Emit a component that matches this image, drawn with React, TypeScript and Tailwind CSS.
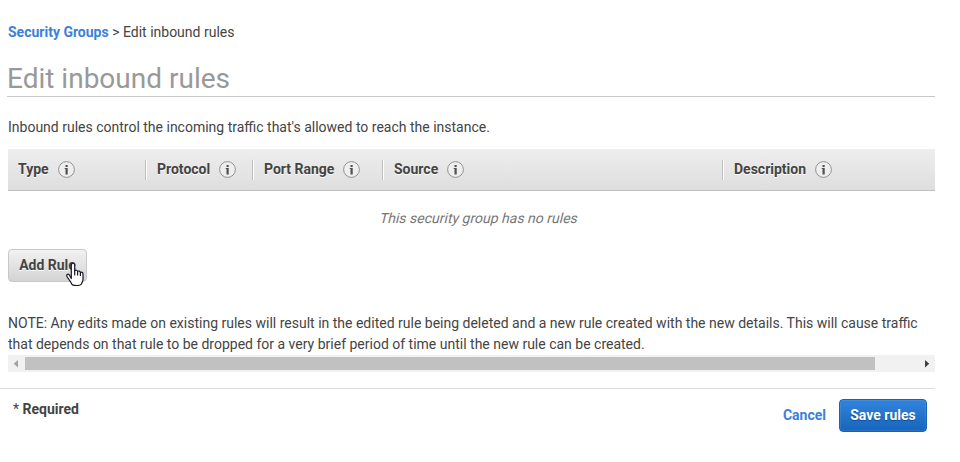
import React from "react";

function Info() {
  return (
    <svg className="h-[17px] w-[17px] shrink-0" viewBox="0 0 17 17">
      <circle cx="8.5" cy="8.5" r="7.9" fill="#eeeeee" stroke="#929292" strokeWidth="1" />
      <path d="M7.500 4h2.200v2h-2.200zM6.700 7h3v6.500h-2.200V8h-.8z" fill="#505050" />
    </svg>
  );
}

type HeadProps = { label: string; width: string; first?: boolean };

function Head({ label, width, first }: HeadProps) {
  return (
    <div className={`flex h-5 shrink-0 items-center gap-[9px] ${width} ${first ? "pl-[10px]" : "border-l border-[#bdbdbd] pl-[11px] shadow-[inset_1px_0_0_#fff]"}`}>
      <span className="font-bold [text-shadow:0_1px_0_#fff]">{label}</span>
      <Info />
    </div>
  );
}

export default function App() {
  return (
    <main className="flex h-[462px] w-[960px] flex-col overflow-hidden bg-white font-['Roboto',sans-serif] text-sm leading-[21px] text-[#444]">
      <nav className="mt-[22px] whitespace-pre pl-2">
        <a className="font-bold text-[#3b7fdb]">Security Groups</a> &gt; Edit inbound rules
      </nav>
      <h1 className="ml-[7px] mt-[17px] h-[37px] w-[928px] border-b border-[#c8c8c8] text-[28px] leading-[38px] text-[#999]">Edit inbound rules</h1>
      <p className="mt-5 pl-2">Inbound rules control the incoming traffic that's allowed to reach the instance.</p>
      <div className="ml-2 mt-[11px] flex h-[42px] w-[927px] items-center border-b border-[#bfbfbf] bg-linear-to-b from-[#eeeeee] to-[#dedede]">
        <Head label="Type" width="w-[137px]" first />
        <Head label="Protocol" width="w-[107px]" />
        <Head label="Port Range" width="w-[130px]" />
        <Head label="Source" width="w-[340px]" />
        <Head label="Description" width="w-[213px]" />
      </div>
      <p className="ml-2 mt-[17px] w-[942px] text-center text-[#777]">
        <span className="inline-block -skew-x-[14deg]">This security group has no rules</span>
      </p>
      <div className="relative ml-2 mt-5 w-[79px]">
        <button className="flex h-[33px] w-[79px] items-center justify-center rounded-[4px] border border-[#c8c8c8] bg-linear-to-b from-[#f2f2f2] to-[#d3d3d3] font-bold [text-shadow:0_1px_0_#fff]">Add Rule</button>
        <svg className="absolute left-[58px] top-[13px] h-[25px] w-[18px]" viewBox="0 0 18 25">
          <path
            d="M5.3 16.5V3.2c0-2.6 3.4-2.6 3.4 0v5.600c.5-1 2.700-.7 2.900.7.7-.9 2.600-.5 2.800.9.9-.6 2.600 0 2.600 1.600v5.200c0 2.200-1 3-1.600 4.800-1 2-9 2-9.700 0-.6-1.800-2.200-3.500-3.200-5.200L1 14.500c-1-2 .8-3 2.200-1.800z"
            fill="#fff"
            stroke="#15152a"
            strokeWidth="1.2"
            strokeLinejoin="round"
          />
          <path d="M8.700 8.500v4.500M11.600 9.500v3.500M14.400 10.500v3" fill="none" stroke="#15152a" strokeWidth="1.2" strokeLinecap="round" />
        </svg>
      </div>
      <p className="mt-[31px] whitespace-nowrap pl-2">
        NOTE: Any edits made on existing rules will result in the edited rule being deleted and a new rule created with the new details. This will cause traffic
        <br />
        that depends on that rule to be dropped for a very brief period of time until the new rule can be created.
      </p>
      <div className="ml-2 flex h-[17px] w-[927px] items-center bg-[#f1f1f1]">
        <svg className="h-[17px] w-[17px]" viewBox="0 0 17 17"><path d="M10 5v7.500L5.800 8.700z" fill="#a0a0a0" /></svg>
        <div className="h-[13px] w-[850px] bg-[#c1c1c1]" />
        <svg className="ml-auto h-[17px] w-[17px]" viewBox="0 0 17 17"><path d="M7 5v7.500l4.200-3.800z" fill="#404040" /></svg>
      </div>
      <footer className="mt-4 flex w-[935px] items-start border-t border-[#dddddd] pl-[13px] pr-2 pt-[10px]">
        <span className="whitespace-pre">* <b>Required</b></span>
        <a className="ml-auto mt-[6px] font-bold text-[#3b7fdb]">Cancel</a>
        <button className="ml-[13px] flex h-[33px] w-[88px] items-center justify-center rounded-[4px] border border-[#1663b5] bg-linear-to-b from-[#3184dc] to-[#1765bd] font-bold text-white shadow-[inset_0_0_0_1px_rgba(255,255,255,0.08)] [text-shadow:0_1px_1px_#0e4a8c]">Save rules</button>
      </footer>
    </main>
  );
}
